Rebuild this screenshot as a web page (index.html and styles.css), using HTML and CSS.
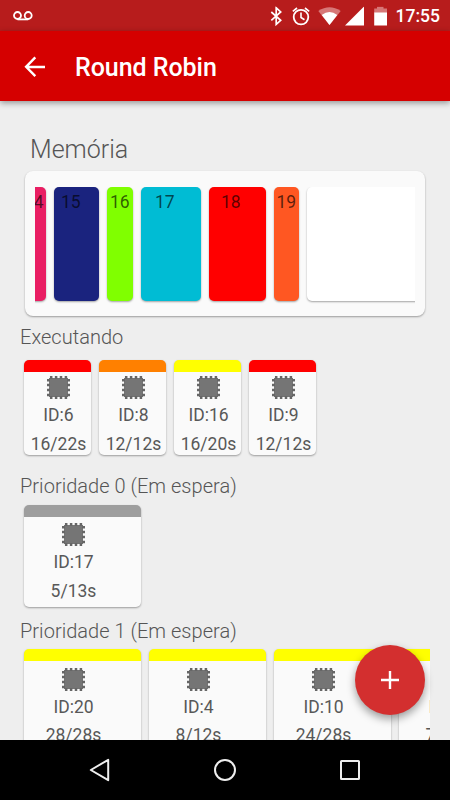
FILE: index.html
```html
<!DOCTYPE html>
<html lang="pt">
<head>
<meta charset="utf-8">
<title>Round Robin</title>
<link rel="stylesheet" href="styles.css">
</head>
<body>
<svg width="0" height="0" class="defs">
  <symbol id="chip" viewBox="0 0 23 23">
    <path d="M2 2H21V21H2Z" fill="#757575"/>
    <path d="M4.2 0V3M9.1 0V3M14 0V3M18.9 0V3M4.2 20V23M9.1 20V23M14 20V23M18.9 20V23M0 4.2H3M0 9.1H3M0 14H3M0 18.9H3M20 4.2H23M20 9.1H23M20 14H23M20 18.9H23" stroke="#666" stroke-width="2.5" fill="none"/>
  </symbol>
</svg>
<div class="screen">
  <header class="status">
    <svg class="voicemail" width="20" height="10" viewBox="0 0 20 10" fill="none" stroke="#fff" stroke-width="1.8"><circle cx="4.5" cy="4.5" r="3.5"/><circle cx="15.2" cy="4.5" r="3.5"/><path d="M4.5 8.4H15.2"/></svg>
    <svg class="icons" width="120" height="20" viewBox="0 0 120 20">
      <path d="M1.3 5L10.7 13.3L6.2 17.4V.8L10.7 5L1.3 13.3" transform="translate(0 .5)" fill="none" stroke="#fff" stroke-width="1.7"/>
      <circle cx="31" cy="10.6" r="7.3" fill="none" stroke="#fff" stroke-width="1.8"/>
      <path d="M31 6V11L34.5 13.2M22.8 4.8L27 1.5M35 1.5L39.2 4.8" fill="none" stroke="#fff" stroke-width="1.6"/>
      <path d="M48.3 4.5Q59.5-3 70.7 4.5L59.5 18.5Z" fill="#d77777"/>
      <path d="M51.7 8.5Q59.5 2.5 67.3 8.5L59.5 18.5Z" fill="#fff"/>
      <path d="M75 19H94V0Z" fill="#fff"/>
      <path d="M104.2 2H107V.3H113.5V2H117V6.5H104.2Z" fill="#d77777"/>
      <path d="M104.2 6H117V19H104.2Z" fill="#fff"/>
    </svg>
    <span class="clock">17:55</span>
  </header>
  <div class="appbar">
    <svg width="22" height="22" viewBox="0 0 22 22" fill="none" stroke="#fff" stroke-width="2.4"><path d="M21 11H2.5M11.3 1.3L2.1 10.8L11.3 20.2"/></svg>
    <h1>Round Robin</h1>
  </div>
  <main>
    <h2 class="memory-title">Memória</h2>
    <section class="memory">
      <div class="track">
        <div class="block pink"><span>14</span></div>
        <div class="block navy"><span>15</span></div>
        <div class="block lime"><span>16</span></div>
        <div class="block cyan"><span>17</span></div>
        <div class="block red"><span>18</span></div>
        <div class="block orange"><span>19</span></div>
        <div class="block free"></div>
      </div>
    </section>
    <h3 class="running-title">Executando</h3>
    <div class="row running">
      <article class="card c-red"><svg><use href="#chip"/></svg><p>ID:6</p><p>16/22s</p></article>
      <article class="card c-orange"><svg><use href="#chip"/></svg><p>ID:8</p><p>12/12s</p></article>
      <article class="card c-yellow"><svg><use href="#chip"/></svg><p>ID:16</p><p>16/20s</p></article>
      <article class="card c-red"><svg><use href="#chip"/></svg><p>ID:9</p><p>12/12s</p></article>
    </div>
    <h3 class="p0-title">Prioridade 0 (Em espera)</h3>
    <div class="row waiting p0">
      <article class="card c-grey"><svg><use href="#chip"/></svg><p>ID:17</p><p>5/13s</p></article>
    </div>
    <h3 class="p1-title">Prioridade 1 (Em espera)</h3>
    <div class="row waiting p1">
      <article class="card c-yellow"><svg><use href="#chip"/></svg><p>ID:20</p><p>28/28s</p></article>
      <article class="card c-yellow"><svg><use href="#chip"/></svg><p>ID:4</p><p>8/12s</p></article>
      <article class="card c-yellow"><svg><use href="#chip"/></svg><p>ID:10</p><p>24/28s</p></article>
      <article class="card c-yellow"><svg><use href="#chip"/></svg><p>ID:11</p><p>7/12s</p></article>
    </div>
    <button class="fab" aria-label="+"><svg width="18" height="18" viewBox="0 0 18 18" stroke="#fff" stroke-width="2.4"><path d="M0 9H18M9 0V18"/></svg></button>
  </main>
  <nav class="nav">
    <svg width="22" height="26" viewBox="0 0 22 26"><path d="M1.8 13L19.2 2.8V23.2Z"/></svg>
    <svg width="24" height="24" viewBox="0 0 24 24"><circle cx="12" cy="12" r="10"/></svg>
    <svg width="20" height="20" viewBox="0 0 20 20"><rect x="1" y="1" width="18" height="18" rx=".5"/></svg>
  </nav>
</div>
</body>
</html>
```
FILE: styles.css
```css
* { box-sizing: border-box; }
body { margin: 0; font-family: Roboto, "Liberation Sans", sans-serif; }
h1, h2, h3, p { margin: 0; }
svg { display: block; flex: none; }
.defs { position: absolute; }
.screen { width: 450px; height: 800px; display: flex; flex-direction: column; overflow: hidden; background: #eee; }

.status { height: 31px; flex: none; display: flex; align-items: center; padding: 0 10px 0 13px; background: #b71c1c; color: #fff; }
.icons { margin-left: auto; margin-right: 5.5px; transform: translateY(.5px); }
.clock { width: 44.5px; font-size: 17.5px; font-weight: 500; line-height: 31px; padding-top: 2px; white-space: nowrap; }

.appbar { height: 70px; flex: none; display: flex; align-items: center; padding: 1px 0 0 24px; gap: 29px; background: #d50000; color: #fff; box-shadow: 0 2px 6px rgba(0,0,0,.38); z-index: 1; }
.appbar h1 { font-size: 25px; font-weight: 500; line-height: 30px; white-space: nowrap; padding-top: 2px; letter-spacing: -.05px; }

main { position: relative; height: 639px; flex: none; padding: 0 20px; display: flex; flex-direction: column; overflow: hidden; }
h2, h3 { font-weight: 300; color: #555; white-space: nowrap; }
.memory-title { flex: none; margin: 34px 0 0 10px; height: 36px; font-size: 25px; line-height: 30px; }
.memory { margin: 0 5px; height: 145px; flex: none; padding: 16px 10px 10px; border-radius: 8px; background: #fafafa; box-shadow: 0 1px 2px rgba(0,0,0,.35); }
.track { display: flex; gap: 8px; height: 119px; overflow: hidden; }
.block { height: 114px; flex: none; border-radius: 5px; font-size: 17.5px; line-height: 20px; padding-top: 5px; color: rgba(0,0,0,.65); box-shadow: 0 1px 2px rgba(0,0,0,.35); }
.pink { width: 25px; margin-left: -14px; background: #e91e63; padding-left: 3px; }
.navy { width: 45px; background: #1a237e; padding-left: 7px; }
.lime { width: 26px; background: #80ff00; padding-left: 3px; }
.cyan { width: 60px; background: #00bcd4; padding-left: 14px; }
.red { width: 57px; background: #f00; padding-left: 12px; }
.orange { width: 25px; background: #ff5722; padding-left: 2.5px; }
.free { width: 120px; background: #fff; }

h3 { flex: none; font-size: 20px; line-height: 24px; height: 24px; letter-spacing: .03px; }
.running-title { margin-top: 9px; }
.row { display: flex; flex: none; gap: 8px; padding-left: 4px; overflow: hidden; }
.card { flex: none; display: flex; flex-direction: column; align-items: center; border-radius: 5px; border-top: 12px solid; background: #fafafa; box-shadow: 0 1px 2px rgba(0,0,0,.35); }
.card svg { width: 23px; height: 23px; }
.card p { font-size: 17.5px; line-height: 28.75px; color: #585858; white-space: nowrap; }
.running { padding-top: 11px; height: 111px; }
.running .card { width: 67px; height: 95px; padding-top: 4px; padding-left: 2px; }
.running .card p:nth-of-type(1) { margin-top: 2px; }
.waiting .card { width: 117px; height: 102px; padding-top: 6.5px; padding-right: 18px; }
.waiting .card p:nth-of-type(1) { margin-top: 2px; }
.p0-title { margin-top: 14px; }
.p0 { padding-top: 6.5px; height: 113px; }
.p0 .card { padding-top: 6.5px; }
.p1-title { margin-top: 8px; }
.p1 { padding-top: 6px; height: 110px; }
.c-red { border-top-color: #f00; }
.c-orange { border-top-color: #ff8000; }
.c-yellow { border-top-color: #ff0; }
.c-grey { border-top-color: #9e9e9e; }

.fab { position: absolute; left: 355px; top: 544px; width: 70px; height: 70px; display: grid; place-items: center; padding: 0; border: 0; border-radius: 50%; background: #d32f2f; box-shadow: 0 4px 8px rgba(0,0,0,.38); }

.nav { height: 60px; flex: none; display: flex; align-items: center; justify-content: space-between; padding: 0 90px 0 89px; background: #000; }
.nav svg { fill: none; stroke: #eee; stroke-width: 2; stroke-linejoin: round; }
.nav svg:nth-child(2) { margin-left: -1px; }
```
